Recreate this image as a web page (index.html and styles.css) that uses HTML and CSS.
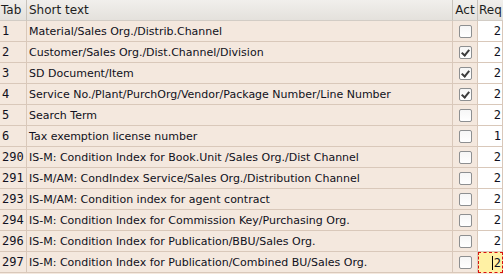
FILE: index.html
```html
<!DOCTYPE html>
<html lang="en">
<head>
    <meta charset="UTF-8">
    <title>Condition Tables</title>
    <link rel="stylesheet" href="styles.css">
</head>
<body>
    <div class="grid">
        <div class="head tab">Tab</div>
        <div class="head">Short text</div>
        <div class="head act">Act</div>
        <div class="head req">Req</div>

        <div class="cell num">1</div>
        <div class="cell">Material/Sales Org./Distrib.Channel</div>
        <div class="cell act"><span class="box"></span></div>
        <div class="cell req">2</div>

        <div class="cell num">2</div>
        <div class="cell">Customer/Sales Org./Dist.Channel/Division</div>
        <div class="cell act"><span class="box checked"></span></div>
        <div class="cell req">2</div>

        <div class="cell num">3</div>
        <div class="cell">SD Document/Item</div>
        <div class="cell act"><span class="box checked"></span></div>
        <div class="cell req">2</div>

        <div class="cell num">4</div>
        <div class="cell">Service No./Plant/PurchOrg/Vendor/Package Number/Line Number</div>
        <div class="cell act"><span class="box checked"></span></div>
        <div class="cell req">2</div>

        <div class="cell num">5</div>
        <div class="cell">Search Term</div>
        <div class="cell act"><span class="box"></span></div>
        <div class="cell req">2</div>

        <div class="cell num">6</div>
        <div class="cell">Tax exemption license number</div>
        <div class="cell act"><span class="box"></span></div>
        <div class="cell req">1</div>

        <div class="cell num">290</div>
        <div class="cell">IS-M: Condition Index for Book.Unit /Sales Org./Dist Channel</div>
        <div class="cell act"><span class="box"></span></div>
        <div class="cell req">2</div>

        <div class="cell num">291</div>
        <div class="cell">IS-M/AM: CondIndex Service/Sales Org./Distribution Channel</div>
        <div class="cell act"><span class="box"></span></div>
        <div class="cell req">2</div>

        <div class="cell num">293</div>
        <div class="cell">IS-M/AM: Condition index for agent contract</div>
        <div class="cell act"><span class="box"></span></div>
        <div class="cell req">2</div>

        <div class="cell num">294</div>
        <div class="cell">IS-M: Condition Index for Commission Key/Purchasing Org.</div>
        <div class="cell act"><span class="box"></span></div>
        <div class="cell req">2</div>

        <div class="cell num">296</div>
        <div class="cell">IS-M: Condition Index for Publication/BBU/Sales Org.</div>
        <div class="cell act"><span class="box"></span></div>
        <div class="cell req">2</div>

        <div class="cell num">297</div>
        <div class="cell">IS-M: Condition Index for Publication/Combined BU/Sales Org.</div>
        <div class="cell act"><span class="box"></span></div>
        <div class="cell req focus"><span class="caret">2</span></div>
    </div>
</body>
</html>
```

FILE: styles.css
```css
body {
    margin: 0;
    background-color: #f4e8de;
    overflow: hidden;
    font-family: "DejaVu Sans", sans-serif;
    font-size: 11px;
    color: #101020;
}

.grid {
    display: grid;
    grid-template-columns: 27px 426px 25px 25px;
    grid-auto-rows: 21px;
    width: 503px;
}

.head,
.cell {
    box-sizing: border-box;
    display: flex;
    align-items: center;
    border-right: 1px solid #d9c8ba;
    border-bottom: 1px solid #d9c8ba;
    padding-left: 2px;
    white-space: nowrap;
    overflow: hidden;
}

.head {
    background: linear-gradient(#f1efec, #e4e1dc);
    border-right-color: #c8c3bc;
    border-bottom-color: #d2ccc5;
    color: #1e1e1e;
    font-size: 12px;
}

.head.tab {
    padding-left: 1px;
}

.head.act {
    justify-content: center;
    padding-left: 0;
}

.head.req {
    padding-left: 1px;
    border-right: none;
    overflow: visible;
    font-family: "DejaVu Sans", sans-serif;
}

.num,
.cell.req {
    font-family: "DejaVu Sans Mono", monospace;
    font-size: 12px;
}

.cell.act {
    justify-content: center;
    padding-left: 0;
}

.cell.req {
    background-color: #ffffff;
    justify-content: flex-end;
    padding-right: 1px;
}

.cell.req.focus {
    background-color: #fff1a4;
    border: 1px dashed #d81010;
}

.caret {
    border-left: 1px solid #000;
    padding-left: 1px;
}

.box {
    display: block;
    width: 11px;
    height: 11px;
    border: 1px solid #8d8f91;
    border-radius: 2px;
    background: linear-gradient(#f6f6f6, #ffffff);
    position: relative;
}

.box.checked::after {
    content: "";
    position: absolute;
    left: 3px;
    top: 1px;
    width: 3px;
    height: 6px;
    border-right: 2px solid #3c3c3c;
    border-bottom: 2px solid #3c3c3c;
    transform: rotate(40deg);
}
```
